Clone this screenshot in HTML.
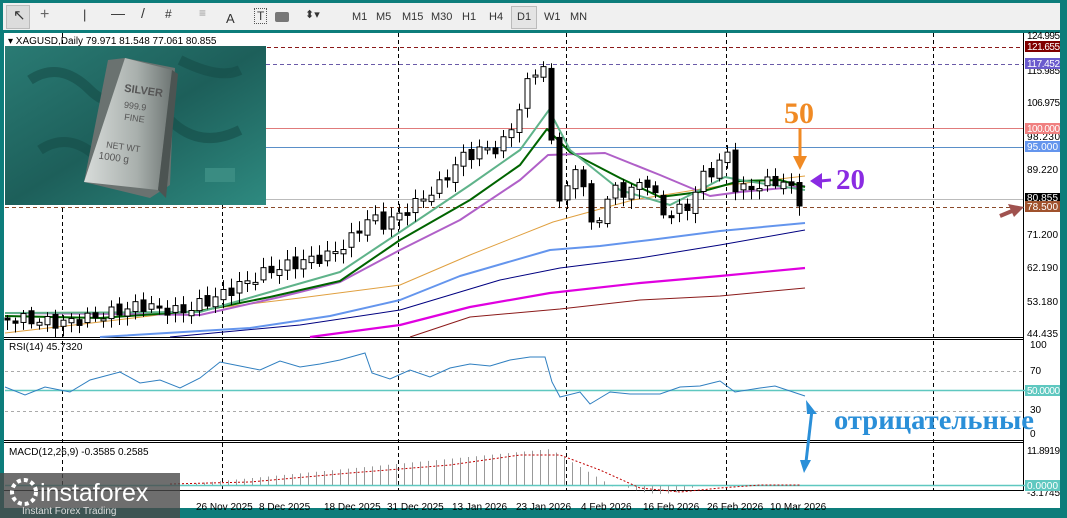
<!DOCTYPE html>
<html><head><meta charset="utf-8">
<style>
html,body{margin:0;padding:0;width:1067px;height:518px;overflow:hidden;background:#0d7d7b;font-family:"Liberation Sans",sans-serif}
#tb{position:absolute;left:3px;top:3px;width:1057px;height:27px;background:#f0f0f0;font-size:11px;color:#333}
#tb span{position:absolute;top:8px}
svg{position:absolute;left:0;top:0}
</style></head><body>
<div id="tb">
<div style="position:absolute;left:3px;top:2px;width:22px;height:22px;background:#dcdcdc;border:1px solid #bbb"></div>
<span style="left:10px;top:3px;font-size:15px">&#x2196;</span>
<span style="left:37px;top:3px;font-size:16px;color:#666">+</span>
<span style="left:80px;top:4px;font-size:13px">|</span>
<span style="left:108px;top:2px;font-size:14px">—</span>
<span style="left:138px;top:2px;font-size:14px">/</span>
<span style="left:162px;top:4px;font-size:12px">#</span>
<span style="left:196px;top:3px;font-size:12px;color:#999">≡</span>
<span style="left:223px;font-size:13px">A</span>
<span style="left:251px;top:5px;font-size:12px;border:1px dotted #555;padding:0 2px">T</span>
<div style="position:absolute;left:272px;top:9px;width:14px;height:10px;background:#777;border-radius:2px"></div>
<span style="left:302px;top:5px;font-size:11px">⬍▾</span>
<span style="left:349px">M1</span><span style="left:373px">M5</span><span style="left:399px">M15</span><span style="left:428px">M30</span><span style="left:459px">H1</span><span style="left:486px">H4</span>
<div style="position:absolute;left:508px;top:3px;width:24px;height:21px;background:#e4e4e4;border:1px solid #bbb"></div>
<span style="left:514px">D1</span><span style="left:541px">W1</span><span style="left:567px">MN</span>
</div>
<svg id="s" width="1067" height="518" xmlns="http://www.w3.org/2000/svg" style="top:0">
<rect x="4" y="33" width="1056" height="475" fill="#fff"/>
<g stroke="#000" stroke-width="1" fill="none">
<line x1="4" y1="337.5" x2="1024" y2="337.5"/><line x1="4" y1="339.5" x2="1024" y2="339.5"/>
<line x1="4" y1="440.5" x2="1024" y2="440.5"/><line x1="4" y1="442.5" x2="1024" y2="442.5"/>
<line x1="4" y1="490.5" x2="1024" y2="490.5"/>
<line x1="1023.5" y1="33" x2="1023.5" y2="491"/>
</g>
<g stroke="#000" stroke-dasharray="4,3" stroke-width="1">
<line x1="62.5" y1="33" x2="62.5" y2="490"/><line x1="222.5" y1="205" x2="222.5" y2="490"/><line x1="398.5" y1="33" x2="398.5" y2="490"/><line x1="566.5" y1="33" x2="566.5" y2="490"/><line x1="726.5" y1="33" x2="726.5" y2="490"/><line x1="933.5" y1="33" x2="933.5" y2="490"/>
</g>
<line x1="232" y1="47.5" x2="1023" y2="47.5" stroke="#8b1a1a" stroke-dasharray="4,3"/>
<line x1="266" y1="64.5" x2="1023" y2="64.5" stroke="#6a5aa8" stroke-dasharray="4,3"/>
<line x1="266" y1="128.5" x2="1023" y2="128.5" stroke="#e07b7b"/>
<line x1="266" y1="147.5" x2="1023" y2="147.5" stroke="#5a8fc8"/>
<line x1="266" y1="199.5" x2="1023" y2="199.5" stroke="#bbb"/>
<line x1="5" y1="207.5" x2="1023" y2="207.5" stroke="#8b4a2a" stroke-dasharray="4,3"/>
<g fill="none" stroke-linejoin="round">
<polyline stroke="#8b1a1a" stroke-width="1" points="410,337 470,317 560,309 640,300 720,296 805,288"/>
<polyline stroke="#e000e0" stroke-width="2.2" points="310,337 400,325 470,307 550,293 640,283 720,276 805,268"/>
<polyline stroke="#000080" stroke-width="1" points="170,337 300,325 400,310 500,280 560,268 640,258 720,245 805,230"/>
<polyline stroke="#6495ed" stroke-width="2" points="100,337 250,328 330,316 400,300 460,276 550,250 600,246 650,240 720,231 805,223"/>
<polyline stroke="#e0a040" stroke-width="1" points="5,333 100,322 200,310 300,298 400,285 470,255 553,222 633,200 720,186 805,176"/>
<polyline stroke="#b060c8" stroke-width="2" points="5,313 130,314 200,315 280,297 340,282 400,250 460,220 520,180 548,155 605,153 660,175 710,196 740,192 805,186"/>
<polyline stroke="#006400" stroke-width="2" points="5,316 100,318 200,311 270,297 340,281 400,240 470,200 520,165 547,129 570,152 620,178 660,197 700,192 740,181 780,180 805,187"/>
<polyline stroke="#5fb38a" stroke-width="2" points="5,313 200,312 270,292 340,272 400,232 470,185 520,150 549,110 570,150 620,190 670,205 700,190 725,177 740,180 805,190"/>
</g>
<g id="cd" stroke="#000" stroke-width="1"></g>
<line x1="5" y1="371.5" x2="1023" y2="371.5" stroke="#aaa" stroke-dasharray="3,3"/>
<line x1="5" y1="411.5" x2="1023" y2="411.5" stroke="#aaa" stroke-dasharray="3,3"/>
<line x1="5" y1="390.5" x2="1060" y2="390.5" stroke="#5fc8c0" stroke-width="1.5"/>
<polyline fill="none" stroke="#2f7fc0" stroke-width="1" points="5,387 25,395 45,387 70,392 90,380 120,372 140,383 160,380 180,388 200,378 220,362 240,366 260,370 280,361 300,367 320,364 340,360 365,353 372,373 390,379 410,370 430,377 450,368 470,364 490,366 510,360 530,357 545,357 552,382 560,397 580,392 590,404 610,392 630,394 660,394 680,387 700,386 720,381 735,392 760,388 775,386 790,391 805,396"/>
<g id="mh" stroke="#999" stroke-width="1"></g>
<line x1="5" y1="485.5" x2="1060" y2="485.5" stroke="#5fc8c0" stroke-width="1.5"/>
<polyline fill="none" stroke="#c00000" stroke-width="1" stroke-dasharray="2,2" points="170,484 250,482 350,473 450,465 520,455 560,455 600,470 640,488 680,492 720,488 760,485 800,485"/>
<g font-size="10" fill="#000" font-family="Liberation Sans,sans-serif">
<text x="1027" y="39" textLength="33">124.995</text><text x="1027" y="74" textLength="33">115.985</text><text x="1027" y="106" textLength="33">106.975</text><text x="1027" y="140" textLength="33">98.230</text><text x="1027" y="173" textLength="31">89.220</text><text x="1027" y="238" textLength="31">71.200</text><text x="1027" y="271" textLength="31">62.190</text><text x="1027" y="305" textLength="31">53.180</text><text x="1027" y="337" textLength="31">44.435</text>
<text x="1030" y="348">100</text><text x="1030" y="374">70</text><text x="1030" y="413">30</text><text x="1030" y="437">0</text>
<text x="1027" y="454" textLength="33">11.8919</text><text x="1027" y="496" textLength="33">-3.1745</text>
</g>
<g font-size="10" fill="#fff">
<rect x="1025" y="41" width="35" height="11" fill="#800000"/><text x="1027" y="50" textLength="33">121.655</text>
<rect x="1025" y="58" width="35" height="11" fill="#6a5acd"/><text x="1027" y="67" textLength="33">117.452</text>
<rect x="1025" y="123" width="35" height="11" fill="#f08080"/><text x="1027" y="132" textLength="33">100.000</text>
<rect x="1025" y="141" width="35" height="11" fill="#6495ed"/><text x="1027" y="150" textLength="31">95.000</text>
<rect x="1025" y="193" width="35" height="9" fill="#000"/><text x="1027" y="201" textLength="31">80.855</text>
<rect x="1025" y="201" width="35" height="11" fill="#a0522d"/><text x="1027" y="210" textLength="31">78.500</text>
<rect x="1025" y="385" width="35" height="11" fill="#5fc8c0"/><text x="1027" y="394" textLength="33">50.0000</text>
<rect x="1025" y="480" width="35" height="11" fill="#5fc8c0"/><text x="1027" y="489" textLength="31">0.0000</text>
</g>
<g font-size="10" fill="#000">
<text x="8" y="44">▾ XAGUSD,Daily  79.971 81.548 77.061 80.855</text>
<text x="9" y="350">RSI(14) 45.7320</text>
<text x="9" y="455">MACD(12,26,9) -0.3585 0.2585</text>
<text x="196" y="510">26 Nov 2025</text><text x="259" y="510">8 Dec 2025</text><text x="324" y="510">18 Dec 2025</text><text x="387" y="510">31 Dec 2025</text><text x="452" y="510">13 Jan 2026</text><text x="516" y="510">23 Jan 2026</text><text x="581" y="510">4 Feb 2026</text><text x="643" y="510">16 Feb 2026</text><text x="707" y="510">26 Feb 2026</text><text x="770" y="510">10 Mar 2026</text>
</g>
<defs>
<linearGradient id="bg" x1="0" y1="0" x2="1" y2="1"><stop offset="0" stop-color="#2a7b74"/><stop offset=".5" stop-color="#1d5f5a"/><stop offset="1" stop-color="#2e8a80"/></linearGradient>
<linearGradient id="bar" x1="0" y1="0" x2="1" y2="0"><stop offset="0" stop-color="#d8dcda"/><stop offset=".6" stop-color="#a9b0ad"/><stop offset="1" stop-color="#6e7674"/></linearGradient>
</defs>
<rect x="5" y="46" width="261" height="159" fill="url(#bg)"/>
<path d="M30 80 Q60 60 90 90 T150 70 M180 60 Q220 80 240 70 M40 150 Q70 130 100 160 M170 120 Q200 150 240 130" stroke="#154c48" stroke-width="10" fill="none" opacity=".6"/>
<polygon points="125,58 175,68 170,185 150,198 84,182 108,60" fill="#6a7270"/>
<polygon points="125,58 172,70 158,190 84,182" fill="url(#bar)"/>
<polygon points="158,190 172,70 178,74 166,198" fill="#4c5452"/>
<g font-size="9" fill="#555" font-family="Liberation Sans,sans-serif" transform="rotate(8 140 120)">
<text x="120" y="94" font-size="11" font-weight="bold">SILVER</text><text x="122" y="110">999.9</text><text x="124" y="122">FINE</text><text x="110" y="152">NET WT</text><text x="104" y="164" font-size="10">1000 g</text></g>
<rect x="205" y="168" width="30" height="14" fill="#3a8c82"/>
<text x="784" y="123" font-family="Liberation Serif,serif" font-weight="bold" font-size="30" fill="#f08a24">50</text>
<line x1="800" y1="128" x2="800" y2="158" stroke="#f08a24" stroke-width="3"/><polygon points="793,156 807,156 800,170" fill="#f08a24"/>
<text x="836" y="189" font-family="Liberation Serif,serif" font-weight="bold" font-size="29" fill="#8a2be2">20</text>
<line x1="820" y1="181" x2="831" y2="180" stroke="#8a2be2" stroke-width="3"/><polygon points="822,173 822,189 810,181" fill="#8a2be2"/>
<line x1="1000" y1="216" x2="1012" y2="211" stroke="#a0524f" stroke-width="4"/><polygon points="1008,204 1014,217 1024,207" fill="#a0524f"/>
<text x="834" y="429" font-family="Liberation Serif,serif" font-weight="bold" font-size="27" fill="#2a8fd8" textLength="200" lengthAdjust="spacingAndGlyphs">отрицательные</text>
<line x1="812" y1="410" x2="806" y2="462" stroke="#2a8fd8" stroke-width="3"/><polygon points="806,400 817,414 807,414" fill="#2a8fd8"/><polygon points="800,460 811,460 804,473" fill="#2a8fd8"/>
<rect x="0" y="473" width="180" height="45" fill="#4a4a4a" opacity=".8"/>
<circle cx="24" cy="492" r="12" fill="none" stroke="#fff" stroke-width="4" stroke-dasharray="4,3"/>
<text x="40" y="501" font-size="25" fill="#fff" font-family="Liberation Sans,sans-serif">instaforex</text>
<text x="22" y="514" font-size="10" fill="#ddd">Instant Forex Trading</text>
</svg>
<script>
var kp=[[7,318],[60,323],[100,316],[140,305],[180,312],[210,300],[240,285],[270,270],[300,262],[330,255],[350,240],[370,215],[380,225],[400,215],[420,200],[440,185],[460,158],[480,150],[500,148],[515,120],[525,88],[535,70],[545,67],[555,195],[565,195],[575,170],[585,185],[592,235],[600,215],[610,190],[625,192],[640,185],[650,180],[660,215],[680,210],[690,205],[700,178],[710,172],[720,162],[726,148],[732,185],[745,190],[760,185],[770,182],[780,180],[790,188],[797,200],[805,200]];
function iy(x){for(var i=1;i<kp.length;i++){if(x<=kp[i][0]){var a=kp[i-1],b=kp[i];return a[1]+(b[1]-a[1])*(x-a[0])/(b[0]-a[0]);}}return 200;}
var g=document.getElementById('cd'),h='',prev=318;
for(var i=0;i<100;i++){var x=Math.round(7+i*8);if(x>806)break;var c=iy(x)+Math.sin(i*2.3)*6;var o=prev+Math.sin(i*1.7)*3;prev=c;
var t=Math.min(o,c),b=Math.max(o,c);if(b-t<2)b=t+2;var hi=t-3-Math.abs(Math.sin(i*3.1))*7,lo=b+3+Math.abs(Math.cos(i*2.7))*7;
h+='<line x1="'+(x+.5)+'" y1="'+hi+'" x2="'+(x+.5)+'" y2="'+lo+'"/>';
h+='<rect x="'+(x-2)+'" y="'+t+'" width="5" height="'+(b-t)+'" fill="'+(c<o?'#fff':'#000')+'"/>';}
g.innerHTML=h;
var m=document.getElementById('mh'),s='';
for(var x=180;x<=700;x+=8){var v;if(x<=550)v=(x-180)/370*36;else if(x<620)v=36*(1-(x-550)/60);else v=-9*Math.sin((x-620)/80*Math.PI);
if(v>0.5||v<-0.5)s+='<line x1="'+(x+.5)+'" y1="485" x2="'+(x+.5)+'" y2="'+(485-v)+'"/>';}
m.innerHTML=s;
</script>
</body></html>
